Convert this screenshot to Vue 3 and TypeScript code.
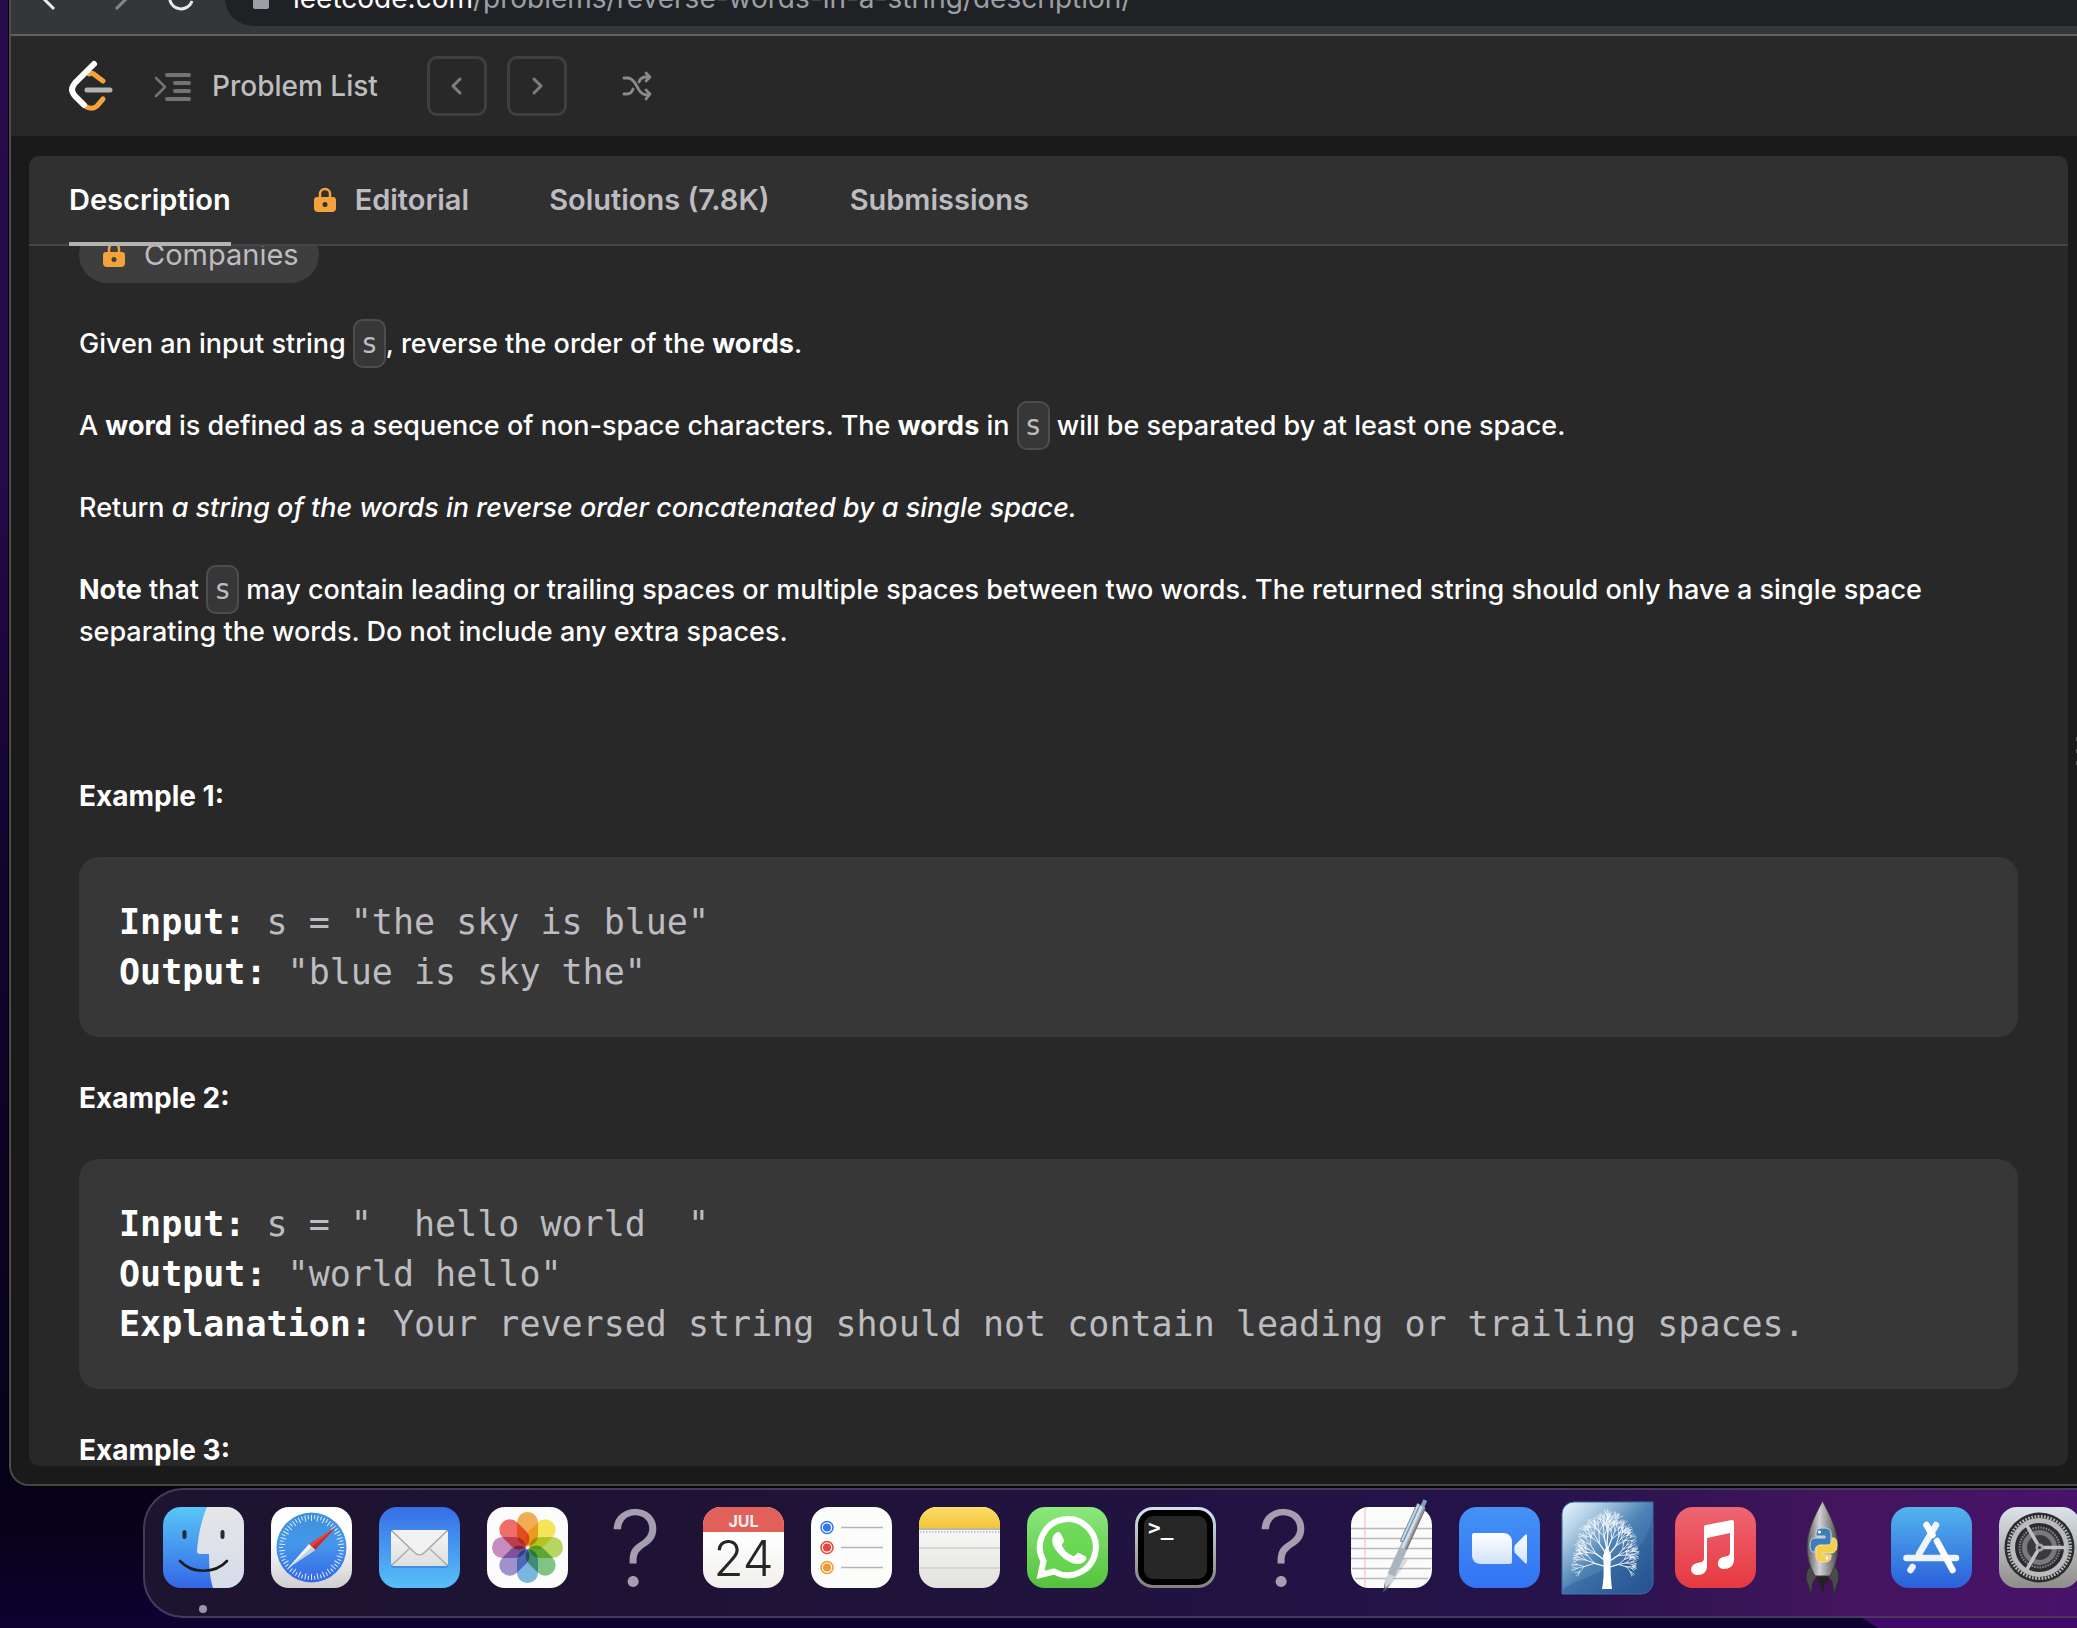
<script setup lang="ts">
interface Tab {
  label: string
  locked?: boolean
  active?: boolean
}

interface Field {
  name: string
  value: string
}

interface Example {
  title: string
  fields: Field[]
}

interface Branch {
  x1: number
  y1: number
  x2: number
  y2: number
  w: number
}

const tabs: Tab[] = [
  { label: 'Description', active: true },
  { label: 'Editorial', locked: true },
  { label: 'Solutions (7.8K)' },
  { label: 'Submissions' },
]

const examples: Example[] = [
  {
    title: 'Example 1:',
    fields: [
      { name: 'Input:', value: ' s = "the sky is blue"' },
      { name: 'Output:', value: ' "blue is sky the"' },
    ],
  },
  {
    title: 'Example 2:',
    fields: [
      { name: 'Input:', value: ' s = "  hello world  "' },
      { name: 'Output:', value: ' "world hello"' },
      { name: 'Explanation:', value: ' Your reversed string should not contain leading or trailing spaces.' },
    ],
  },
]

const apps: string[] = [
  'Finder', 'Safari', 'Mail', 'Photos', 'Missing app', 'Calendar', 'Reminders', 'Notes', 'WhatsApp',
  'Terminal', 'Missing application', 'TextEdit', 'Zoom', 'Tree viewer', 'Music', 'Python launcher',
  'App Store', 'System Preferences',
]

const petals = ['#f39a2c', '#f7e231', '#a6cf3c', '#62b868', '#5ba5de', '#8878c6', '#bd72b2', '#ee4c44']

// Branches fan out from the trunk; the jitter is a fixed sequence so the tree is always the same.
function growTree(): Branch[] {
  const out: Branch[] = []
  let seed = 7
  const rnd = () => {
    seed = (seed * 16807) % 2147483647
    return seed / 2147483647 - 0.5
  }
  const grow = (x: number, y: number, angle: number, len: number, depth: number) => {
    const x2 = x + Math.cos(angle) * len
    const y2 = y + Math.sin(angle) * len
    out.push({ x1: x, y1: y, x2, y2, w: [0.6, 0.7, 0.9, 1.3, 2][depth] })
    if (depth === 0) return
    for (const turn of [-0.45, 0.02, 0.48]) {
      grow(x2, y2, angle + turn + rnd() * 0.3, len * (0.72 + rnd() * 0.2), depth - 1)
    }
  }
  const limbs: [number, number, number][] = [
    [60, -2.85, 13], [55, -2.5, 14], [48, -2.15, 14], [42, -1.8, 13], [38, -1.5, 13],
    [44, -1.2, 13], [50, -0.9, 14], [56, -0.6, 13], [61, -0.3, 12],
  ]
  for (const [y, angle, len] of limbs) grow(40, y, angle, len, 3)
  return out
}
const branches = growTree()
</script>

<template>
  <div class="desktop">
    <div class="window">
      <div class="toolbar">
        <button class="tool" aria-label="Back">
          <svg width="36" height="36" viewBox="0 0 36 36" fill="none" stroke="#e8eaed" stroke-width="3"><path d="M17 29 2 14 17-1M2 14h26" /></svg>
        </button>
        <button class="tool" aria-label="Forward">
          <svg width="36" height="36" viewBox="0 0 36 36" fill="none" stroke="#85878b" stroke-width="3"><path d="M19 29 34 14 19-1M34 14H8" /></svg>
        </button>
        <button class="tool" aria-label="Reload">
          <svg width="36" height="36" viewBox="0 0 36 36" fill="none" stroke="#e8eaed" stroke-width="3"><path d="M35 21a11.500 11.500 0 1 1-3-12" /></svg>
        </button>
        <div class="address">
          <svg width="16" height="24" viewBox="0 0 16 24"><rect y="8" width="16" height="15" rx="2" fill="#9aa0a6" /></svg>
          <span class="url"><b>leetcode.com</b>/problems/reverse-words-in-a-string/description/</span>
        </div>
      </div>

      <header class="site">
        <a class="logo" href="#" aria-label="LeetCode">
          <svg width="44" height="52" viewBox="0 0 44 52" fill="none" stroke-linecap="round" stroke-width="5">
            <path d="M20 14c2-1 4-1 6 1l8 6M15 45c4 4 10 4 13 1l6-7" stroke="#f3a33c" />
            <path d="M18 30h23" stroke="#b3b3b3" />
            <path d="M25 4 6 23c-4 5-4 8 0 13l9 9" stroke="#fff" stroke-width="6" />
          </svg>
        </a>
        <a class="list" href="#">
          <svg width="38" height="30" viewBox="0 0 38 30" fill="none" stroke="#737373" stroke-width="3" stroke-linecap="round" stroke-linejoin="round">
            <path d="m2 7 9 9-9 9" stroke-width="2.500" />
            <path d="M13 4h22M21 12h14M21 20h14M13 28h22" stroke-width="4" />
          </svg>
          <span>Problem List</span>
        </a>
        <div class="pager">
          <button aria-label="Previous problem">
            <svg width="24" height="24" viewBox="0 0 24 24" fill="none" stroke="#7d7d7d" stroke-width="3" stroke-linecap="round" stroke-linejoin="round"><path d="m15 5-7 7 7 7" /></svg>
          </button>
          <button aria-label="Next problem">
            <svg width="24" height="24" viewBox="0 0 24 24" fill="none" stroke="#7d7d7d" stroke-width="3" stroke-linecap="round" stroke-linejoin="round"><path d="m9 5 7 7-7 7" /></svg>
          </button>
        </div>
        <button class="shuffle" aria-label="Random problem">
          <svg width="30" height="28" viewBox="0 0 30 28" fill="none" stroke="#8a8a8a" stroke-width="2.800" stroke-linecap="round" stroke-linejoin="round">
            <path d="M2 6h3c4 0 6 2 8 5l4 7c2 3 4 5 8 5h2M2 22h3c3 0 5-2 6-5M17 10c1-3 4-5 7-5h3M24 1l4 4-4 4M24 18l4 4-4 5" />
          </svg>
        </button>
      </header>

      <div class="workspace">
        <main class="panel">
          <nav class="tabs">
            <a v-for="tab in tabs" :key="tab.label" href="#" class="tab" :class="{ active: tab.active }">
              <svg v-if="tab.locked" class="lock" width="28" height="28" viewBox="0 0 28 28">
                <path d="M9 12V8a5 5 0 0 1 10 0v4" fill="none" stroke="#f3a33c" stroke-width="2.500" />
                <path fill-rule="evenodd" fill="#f3a33c" d="M6 11h16a3 3 0 0 1 3 3v8a4 4 0 0 1-4 4H7a4 4 0 0 1-4-4v-8a3 3 0 0 1 3-3zm8 5a2.500 2.500 0 1 0 0 5 2.500 2.500 0 0 0 0-5z" />
              </svg>
              <span>{{ tab.label }}</span>
            </a>
          </nav>

          <div class="scroll">
            <article class="problem">
              <button class="pill">
                <svg class="lock" width="28" height="28" viewBox="0 0 28 28">
                  <path d="M9 12V8a5 5 0 0 1 10 0v4" fill="none" stroke="#f3a33c" stroke-width="2.500" />
                  <path fill-rule="evenodd" fill="#f3a33c" d="M6 11h16a3 3 0 0 1 3 3v8a4 4 0 0 1-4 4H7a4 4 0 0 1-4-4v-8a3 3 0 0 1 3-3zm8 5a2.500 2.500 0 1 0 0 5 2.500 2.500 0 0 0 0-5z" />
                </svg>
                <span>Companies</span>
              </button>

              <p>Given an input string <code>s</code>, reverse the order of the <strong>words</strong>.</p>
              <p>A <strong>word</strong> is defined as a sequence of non-space characters. The <strong>words</strong> in <code>s</code> will be separated by at least one space.</p>
              <p>Return <em>a string of the words in reverse order concatenated by a single space.</em></p>
              <p><strong>Note</strong> that <code>s</code> may contain leading or trailing spaces or multiple spaces between two words. The returned string should only have a single space separating the words. Do not include any extra spaces.</p>
              <p>&nbsp;</p>

              <template v-for="example in examples" :key="example.title">
                <p class="title"><strong>{{ example.title }}</strong></p>
                <pre><template v-for="field in example.fields" :key="field.name"><strong>{{ field.name }}</strong>{{ field.value + '\n' }}</template></pre>
              </template>
              <p class="title"><strong>Example 3:</strong></p>
            </article>
          </div>
        </main>
        <div class="gutter"><i></i><i></i><i></i></div>
      </div>
    </div>

    <nav class="dock" aria-label="Dock">
      <button v-for="app in apps" :key="app" class="app" :class="{ running: app === 'Finder' }" :aria-label="app">
        <svg v-if="app === 'Finder'" width="81" height="81" viewBox="0 0 81 81">
          <defs>
            <linearGradient id="fa" x2="0" y2="1"><stop stop-color="#58c6f7" /><stop offset="1" stop-color="#3467e8" /></linearGradient>
            <linearGradient id="fb" x2="0" y2="1"><stop stop-color="#e6e5ea" /><stop offset="1" stop-color="#d5dde7" /></linearGradient>
            <clipPath id="tile"><rect width="81" height="81" rx="18" /></clipPath>
          </defs>
          <g clip-path="url(#tile)">
            <path d="M0 0h81v81H0z" fill="url(#fa)" />
            <path d="M44 0C38 14 35 30 34 44q0 3 3 3h9c0 14 1 24 4 34h31V0z" fill="url(#fb)" />
          </g>
          <path d="M21.500 25v5M59.500 25v5" stroke="#252a30" stroke-width="4" stroke-linecap="round" />
          <path d="M17 54c12 13 35 13 47 0" fill="none" stroke="#1c1c1e" stroke-width="2.600" stroke-linecap="round" />
        </svg>

        <svg v-else-if="app === 'Safari'" width="81" height="81" viewBox="0 0 81 81">
          <defs>
            <linearGradient id="sa" x2="0" y2="1"><stop offset=".4" stop-color="#fff" /><stop offset="1" stop-color="#cfcfd1" /></linearGradient>
            <linearGradient id="sb" x2="0" y2="1"><stop stop-color="#3f8fdc" /><stop offset=".45" stop-color="#4597ea" /><stop offset="1" stop-color="#3566e6" /></linearGradient>
          </defs>
          <rect width="81" height="81" rx="18" fill="url(#sa)" />
          <circle cx="40.500" cy="40.500" r="35" fill="url(#sb)" />
          <path v-for="n in 60" :key="n" :d="n % 2 ? 'M40.500 8v4' : 'M40.500 8v6'" stroke="#dcecfa" stroke-width="1" :transform="`rotate(${n * 6} 40.500 40.500)`" />
          <path d="M65 20 38 37l6 6z" fill="#e5443c" />
          <path d="M65 20 44 43l-3-3z" fill="#c2302c" />
          <path d="M17 61 38 37l6 6z" fill="#f4f6f8" />
          <path d="M17 61 44 43l-3-3z" fill="#c9d0d8" />
        </svg>

        <svg v-else-if="app === 'Mail'" width="81" height="81" viewBox="0 0 81 81">
          <defs>
            <linearGradient id="ma" x2="0" y2="1"><stop stop-color="#366fe6" /><stop offset="1" stop-color="#57c0f8" /></linearGradient>
            <linearGradient id="mb" x2="0" y2="1"><stop stop-color="#f7f7f8" /><stop offset="1" stop-color="#dededf" /></linearGradient>
          </defs>
          <rect width="81" height="81" rx="18" fill="url(#ma)" />
          <rect x="12" y="25" width="57" height="36" rx="3" fill="#1f62b8" opacity=".35" />
          <rect x="12" y="23" width="57" height="36" rx="3" fill="url(#mb)" />
          <path d="m13 58 17-16M68 58 51 42" stroke="#a9a9ab" stroke-width="1.300" />
          <path d="m13 24 22 21c4 4 7 4 11 0l22-21" fill="#f1f1f2" stroke="#a5a5a7" stroke-width="1.400" />
        </svg>

        <svg v-else-if="app === 'Photos'" class="photos" width="81" height="81" viewBox="0 0 81 81">
          <rect width="81" height="81" rx="18" fill="#fcfcfc" />
          <rect v-for="(color, i) in petals" :key="color" class="petal" x="30" y="5" width="21" height="34" rx="10.500" :fill="color" :transform="`rotate(${i * 45} 40.500 40.500)`" />
        </svg>

        <svg v-else-if="app.startsWith('Missing')" width="81" height="81" viewBox="0 0 81 81">
          <text x="40.500" y="79" text-anchor="middle" font-family="Inter, sans-serif" font-size="105" font-weight="300" fill="#a59db0">?</text>
        </svg>

        <svg v-else-if="app === 'Calendar'" width="81" height="81" viewBox="0 0 81 81">
          <defs><linearGradient id="ca" x2="0" y2="1"><stop offset=".4" stop-color="#fefefe" /><stop offset="1" stop-color="#f0efec" /></linearGradient></defs>
          <rect width="81" height="81" rx="18" fill="url(#ca)" />
          <path d="M0 25v-7A18 18 0 0 1 18 0h45a18 18 0 0 1 18 18v7z" fill="#e2605a" />
          <text x="40.500" y="20" text-anchor="middle" font-family="Inter, sans-serif" font-size="16" font-weight="700" fill="#fbeeee">JUL</text>
          <text x="40.500" y="69" text-anchor="middle" font-family="Inter, sans-serif" font-size="49" font-weight="300" fill="#262626">24</text>
        </svg>

        <svg v-else-if="app === 'Reminders'" width="81" height="81" viewBox="0 0 81 81">
          <rect width="81" height="81" rx="18" fill="#fcfcfb" />
          <g v-for="(color, i) in ['#2f78f2', '#e6453a', '#ee982f']" :key="color">
            <circle cx="16" :cy="20.500 + i * 20" r="6" fill="none" :stroke="color" stroke-width="1.500" />
            <circle cx="16" :cy="20.500 + i * 20" r="4" :fill="color" />
            <path :d="`M30 ${20.500 + i * 20}h42`" stroke="#b5b4b8" stroke-width="1.600" />
          </g>
        </svg>

        <svg v-else-if="app === 'Notes'" width="81" height="81" viewBox="0 0 81 81">
          <defs>
            <linearGradient id="na" x2="0" y2="1"><stop stop-color="#fbdc68" /><stop offset="1" stop-color="#f4c53a" /></linearGradient>
            <linearGradient id="nb" x2="0" y2="1"><stop offset=".3" stop-color="#f7f7f5" /><stop offset="1" stop-color="#e2e1dc" /></linearGradient>
          </defs>
          <rect width="81" height="81" rx="18" fill="url(#nb)" />
          <path d="M0 21v-3A18 18 0 0 1 18 0h45a18 18 0 0 1 18 18v3z" fill="url(#na)" />
          <path d="M0 22h81" stroke="#b9b6ab" stroke-width="2" />
          <path d="M1 25h80" stroke="#bcbab6" stroke-width="1.500" stroke-dasharray="1.500 1.500" />
          <path d="M0 41h81M0 61h81" stroke="#cfced0" stroke-width="1.500" />
        </svg>

        <svg v-else-if="app === 'WhatsApp'" width="81" height="81" viewBox="0 0 81 81">
          <defs><linearGradient id="wa" x2="0" y2="1"><stop stop-color="#8be87d" /><stop offset="1" stop-color="#55c13d" /></linearGradient></defs>
          <rect width="81" height="81" rx="18" fill="url(#wa)" />
          <path d="M16.500 54A28 28 0 1 1 27 64.500L13.500 68z" fill="#67d94e" fill-opacity=".6" stroke="#fff" stroke-width="6" />
          <path d="M29 26c2-2 4-1 5 1l3 6c1 2-3 4-2 6 3 5 6 8 11 10 2 1 4-4 6-3l6 3c2 1 2 3 0 5-5 5-12 3-17 0-6-3-11-9-14-14-3-6-2-11 2-14z" fill="#fff" />
        </svg>

        <svg v-else-if="app === 'Terminal'" width="81" height="81" viewBox="0 0 81 81">
          <defs><linearGradient id="ta" x2="0" y2="1"><stop stop-color="#d3e4f0" /><stop offset="1" stop-color="#827f7e" /></linearGradient></defs>
          <rect width="81" height="81" rx="18" fill="url(#ta)" />
          <rect x="3" y="3" width="75" height="75" rx="15" fill="#000" />
          <rect x="9" y="9" width="63" height="63" rx="9" fill="#262626" />
          <text x="13" y="28" font-family="DejaVu Sans Mono, monospace" font-size="21" font-weight="700" fill="#fff">&gt;_</text>
        </svg>

        <svg v-else-if="app === 'TextEdit'" width="81" height="81" viewBox="0 0 81 81">
          <defs><linearGradient id="pen" x1="0" x2="1"><stop stop-color="#8fb2ca" /><stop offset=".4" stop-color="#d6e8f3" /><stop offset=".7" stop-color="#9aa4ae" /><stop offset="1" stop-color="#6f6256" /></linearGradient></defs>
          <rect width="81" height="81" rx="18" fill="#fbfbfb" />
          <path d="M0 21.500h81M0 31.500h81M0 41.500h81M0 51.500h81M1 61.500h79M4 71.500h73" stroke="#b9b9bb" stroke-width="1.300" />
          <path d="M14 0v80" stroke="#f0b9b5" stroke-width="1" />
          <g transform="rotate(24.500 32 86)">
            <path d="m34 84-3-14v-24h10z" fill="#8d8d90" opacity=".3" />
            <path d="m32 86-3.500-14h7z" fill="#55565a" />
            <path d="m28 72 1-7h6l1 7-4 9z" fill="#cdd6dd" />
            <path d="M28 66V36h8v30z" fill="#aab4bf" />
            <path d="M28 37V-8l2-2h4l2 2v45z" fill="url(#pen)" />
            <path d="M30-16h4v7h-4z" fill="#7fa0bd" />
            <path d="M26-10h3v40l-2 2-1-2z" fill="#bcd8ea" stroke="#4c5a66" stroke-width=".6" />
          </g>
        </svg>

        <svg v-else-if="app === 'Zoom'" width="81" height="81" viewBox="0 0 81 81">
          <defs>
            <linearGradient id="za" x2="0" y2="1"><stop stop-color="#4492f6" /><stop offset="1" stop-color="#3273f3" /></linearGradient>
            <linearGradient id="zb" x2="0" y2="1"><stop stop-color="#fff" /><stop offset="1" stop-color="#cfe2fb" /></linearGradient>
          </defs>
          <rect width="81" height="81" rx="18" fill="url(#za)" />
          <path d="M15 26h29c6 0 9 4 9 9v20a2 2 0 0 1-2 2H22c-6 0-9-4-9-9V28a2 2 0 0 1 2-2zM56 38l10-10c1-1 2-1 2 1v26c0 2-1 2-2 1L56 46c-1-2-1-6 0-8z" fill="url(#zb)" />
        </svg>

        <svg v-else-if="app === 'Tree viewer'" width="81" height="81" viewBox="0 0 81 81">
          <defs><linearGradient id="tr" x2="1" y2="1"><stop stop-color="#eaf6fc" /><stop offset=".2" stop-color="#b5d2e6" /><stop offset=".5" stop-color="#4d82b4" /><stop offset="1" stop-color="#264f8d" /></linearGradient></defs>
          <path d="M-5 7A12 12 0 0 1 7-5h79v80a12 12 0 0 1-12 12H-5z" fill="url(#tr)" stroke="#3a6ca6" />
          <path d="M-4 82C20 66 80 58 85 10v65a11 11 0 0 1-11 11H-4z" fill="#1f4f92" opacity=".35" />
          <path d="M35 82c2-9 2-22 1-33l4-12 4 12c-1 12 0 24 1 33z" fill="#fff" />
          <path v-for="(b, i) in branches" :key="i" :d="`M${b.x1} ${b.y1}L${b.x2} ${b.y2}`" :stroke-width="b.w" stroke="#f6f8fb" stroke-linecap="round" />
        </svg>

        <svg v-else-if="app === 'Music'" width="81" height="81" viewBox="0 0 81 81">
          <defs><linearGradient id="mu" x2="0" y2="1"><stop stop-color="#ee6573" /><stop offset="1" stop-color="#e63940" /></linearGradient></defs>
          <rect width="81" height="81" rx="18" fill="url(#mu)" />
          <path d="M29 20q0-2 2-2l26-5q2 0 2 2v38c0 6-5 9-10 9-8 0-8-10-1-12 5-1 7-1 7-5V26l-23 5v28c0 6-4 9-9 9-9 0-9-10-1-12 5-1 7-1 7-5z" fill="#fff" />
        </svg>

        <svg v-else-if="app === 'Python launcher'" width="81" height="81" viewBox="0 0 81 81">
          <defs><linearGradient id="ro"><stop stop-color="#5a5a5c" /><stop offset=".4" stop-color="#d2d2d4" /><stop offset="1" stop-color="#4b4b4d" /></linearGradient></defs>
          <path d="M28 58c-6 6-6 14-3 20l3 10 2-13 5-7zM51 58c6 6 6 14 3 20l-3 10-2-13-5-7z" fill="#4a4a4c" stroke="#29292b" />
          <path d="M33 68h13l-2 7-3 3v6h-3v-6l-3-3z" fill="#222" />
          <path d="M39.500-6C31 10 24 24 24 40c0 12 4 22 8 29h15c4-7 8-17 8-29 0-16-7-30-15.500-46z" fill="url(#ro)" stroke="#3a3a3c" />
          <path d="M27 38c0-6 3-7 6-7h9v-2h-9c0-6 1-8 8-8 5 0 7 2 7 6v7c0 4-2 5-5 5h-6c-4 0-5 2-5 6h-1c-3 0-4-2-4-7z" fill="#3f7db9" stroke="#c8d8e6" />
          <path d="M54 38c0 6-3 8-6 8h-9v2h9c0 5-1 7-8 7-5 0-7-2-7-6v-6c0-4 2-5 5-5h6c4 0 5-2 5-7h1c3 0 4 2 4 7z" fill="#f3cf4a" stroke="#f0e3b0" />
          <circle cx="36.500" cy="25" r="1.500" fill="#fff" /><circle cx="44" cy="51" r="1.500" fill="#fff" />
        </svg>

        <svg v-else-if="app === 'App Store'" width="81" height="81" viewBox="0 0 81 81">
          <defs><linearGradient id="as" x2="0" y2="1"><stop stop-color="#52b4ee" /><stop offset="1" stop-color="#2b60da" /></linearGradient></defs>
          <rect width="81" height="81" rx="18" fill="url(#as)" />
          <g fill="none" stroke-width="6.500" stroke-linecap="round">
            <path d="M45 18 28 47M15.500 51h49.500M21.500 60l-2 3" stroke="#eef4fb" />
            <path d="m35.500 18 6 10M46 34l15.500 29" stroke="#fff" />
          </g>
        </svg>

        <svg v-else width="81" height="81" viewBox="0 0 81 81">
          <defs><linearGradient id="se" x2="0" y2="1"><stop stop-color="#dbe4ea" /><stop offset="1" stop-color="#8f8c89" /></linearGradient></defs>
          <rect width="81" height="81" rx="18" fill="url(#se)" />
          <circle cx="40.500" cy="40.500" r="35" fill="#2c2c2e" />
          <circle cx="40.500" cy="40.500" r="31" fill="none" stroke="#b4b6b8" stroke-width="3" stroke-dasharray="1.800 1.400" />
          <circle cx="40.500" cy="40.500" r="27" fill="none" stroke="#b9bbbd" stroke-width="5" />
          <circle cx="40.500" cy="40.500" r="20" fill="#3a3a3c" stroke="#85878a" stroke-width="2" stroke-dasharray="1.500 1.200" />
          <circle cx="40.500" cy="40.500" r="15" fill="#3a3a3c" stroke="#77797c" stroke-width="5" />
          <path v-for="n in 3" :key="n" d="M40.500 40.500h26" stroke="#bfc1c3" stroke-width="3.500" :transform="`rotate(${n * 120} 40.500 40.500)`" />
          <circle cx="40.500" cy="40.500" r="4" fill="#a5a7a9" /><circle cx="40.500" cy="40.500" r="1.500" fill="#333" />
        </svg>
      </button>
    </nav>
  </div>
</template>

<style>
body {
  overflow: hidden;
  background: #0a0320;
}
</style>

<style scoped>
.desktop {
  display: flex;
  flex-direction: column;
  height: 100vh;
  padding-bottom: 10px;
  box-sizing: border-box;
  overflow: hidden;
  font-family: Inter, "Liberation Sans", sans-serif;
  font-size: 28px;
  line-height: 42px;
  background:
    linear-gradient(32deg, transparent 8px, #400a68 9px) right bottom / 215px 10px no-repeat,
    linear-gradient(#280b4c 0, #230a48 30%, #14042e 52%, #07021a 88%, #080218 94%, #0e0233 100%);
}

button {
  display: flex;
  align-items: center;
  justify-content: center;
  padding: 0;
  border: 0;
  background: none;
  color: inherit;
  font: inherit;
}

a {
  color: inherit;
  text-decoration: none;
}

svg {
  display: block;
  flex: none;
  overflow: visible;
}

.window {
  display: flex;
  flex-direction: column;
  flex: 1;
  min-height: 0;
  margin-left: 9px;
  border-left: 2px solid #4c4c4e;
  border-bottom: 2px solid #474747;
  border-bottom-left-radius: 20px;
  overflow: hidden;
  background: #1a1a1a;
  box-shadow: 0 0 0 1px #000;
}

.toolbar {
  display: flex;
  flex: none;
  align-items: flex-end;
  height: 34px;
  padding-left: 14px;
  border-bottom: 2px solid #616163;
  background: #35363a;
}

.tool {
  width: 60px;
  height: 56px;
  margin-bottom: 8px;
}

.address {
  display: flex;
  flex: 1;
  align-items: center;
  gap: 24px;
  height: 56px;
  margin: 0 0 8px 20px;
  padding-left: 28px;
  border-radius: 28px 0 0 28px;
  background: #202124;
}

.url {
  color: #9aa0a6;
  white-space: nowrap;
}

.url b {
  color: #fff;
  font-weight: 400;
}

.site {
  display: flex;
  flex: none;
  align-items: center;
  height: 100px;
  padding-left: 58px;
  background: #282828;
}

.list {
  display: flex;
  align-items: center;
  gap: 20px;
  margin-left: 41px;
  color: #bdbdbd;
  font-weight: 500;
}

.pager {
  display: flex;
  gap: 20px;
  margin-left: 49px;
}

.pager button {
  box-sizing: border-box;
  width: 60px;
  height: 60px;
  border: 3px solid #3f3f3f;
  border-radius: 10px;
}

.shuffle {
  margin-left: 55px;
}

.workspace {
  display: flex;
  flex: 1;
  min-height: 0;
  padding: 20px 0 18px 18px;
}

.panel {
  display: flex;
  flex: 1;
  flex-direction: column;
  min-width: 0;
  border-radius: 10px;
  overflow: hidden;
  background: #282828;
}

.gutter {
  display: flex;
  flex-direction: column;
  align-items: flex-end;
  justify-content: center;
  gap: 8px;
  width: 9px;
  padding-bottom: 120px;
}

.gutter i {
  width: 1px;
  height: 4px;
  background: #5a5a5a;
}

.tabs {
  display: flex;
  flex: none;
  gap: 80px;
  height: 88px;
  padding: 0 40px;
  border-bottom: 2px solid #454545;
  background: #303030;
}

.tab {
  display: flex;
  align-items: center;
  gap: 16px;
  color: #bcbcc1;
  font-size: 29px;
  font-weight: 600;
  white-space: nowrap;
}

.tab.active {
  box-sizing: border-box;
  height: 90px;
  padding-top: 2px;
  border-bottom: 4px solid #b3b3b3;
  color: #fff;
}

.scroll {
  flex: 1;
  min-height: 0;
  overflow: hidden;
}

.problem {
  margin-top: -20px;
  padding: 0 50px;
  color: #fff;
}

.pill {
  gap: 16px;
  height: 57px;
  padding: 0 20px 0 21px;
  border-radius: 29px;
  background: #3e3e3e;
  color: #bcbcc1;
  font-size: 29px;
}

p {
  margin: 40px 0;
  font-size: 27px;
  font-weight: 500;
}

.title {
  font-size: 28px;
}

strong {
  font-weight: 700;
}

code {
  padding: 6px 6px;
  border: 2px solid #4d4d4d;
  border-radius: 10px;
  background: #373737;
  color: #bcbcc1;
  font-family: "DejaVu Sans Mono", monospace;
  font-size: 28px;
  font-weight: 400;
  line-height: 28px;
}

pre {
  margin: 0;
  padding: 40px;
  border-radius: 20px;
  background: #373737;
  color: #bcbcc1;
  font-family: "DejaVu Sans Mono", monospace;
  font-size: 35px;
  line-height: 50px;
  white-space: pre-wrap;
}

pre strong {
  color: #fff;
}

.dock {
  display: flex;
  flex: none;
  gap: 27px;
  align-items: flex-start;
  box-sizing: border-box;
  height: 130px;
  margin: 2px 0 0 143px;
  padding: 17px 0 0 18px;
  border: 2px solid #463a5c;
  border-right: 0;
  border-radius: 40px 0 0 40px;
  background: linear-gradient(90deg, #1d1430, #1e1334 25%, #20133f 50%, #25134a 72%, #43155e 88%, #48126a);
}

.app {
  position: relative;
  flex: none;
  width: 81px;
}

.running::after {
  content: "";
  position: absolute;
  left: 36px;
  top: 98px;
  width: 8px;
  height: 8px;
  border-radius: 50%;
  background: #9f93b3;
}

.photos {
  isolation: isolate;
}

.petal {
  mix-blend-mode: multiply;
  opacity: .8;
}
</style>
